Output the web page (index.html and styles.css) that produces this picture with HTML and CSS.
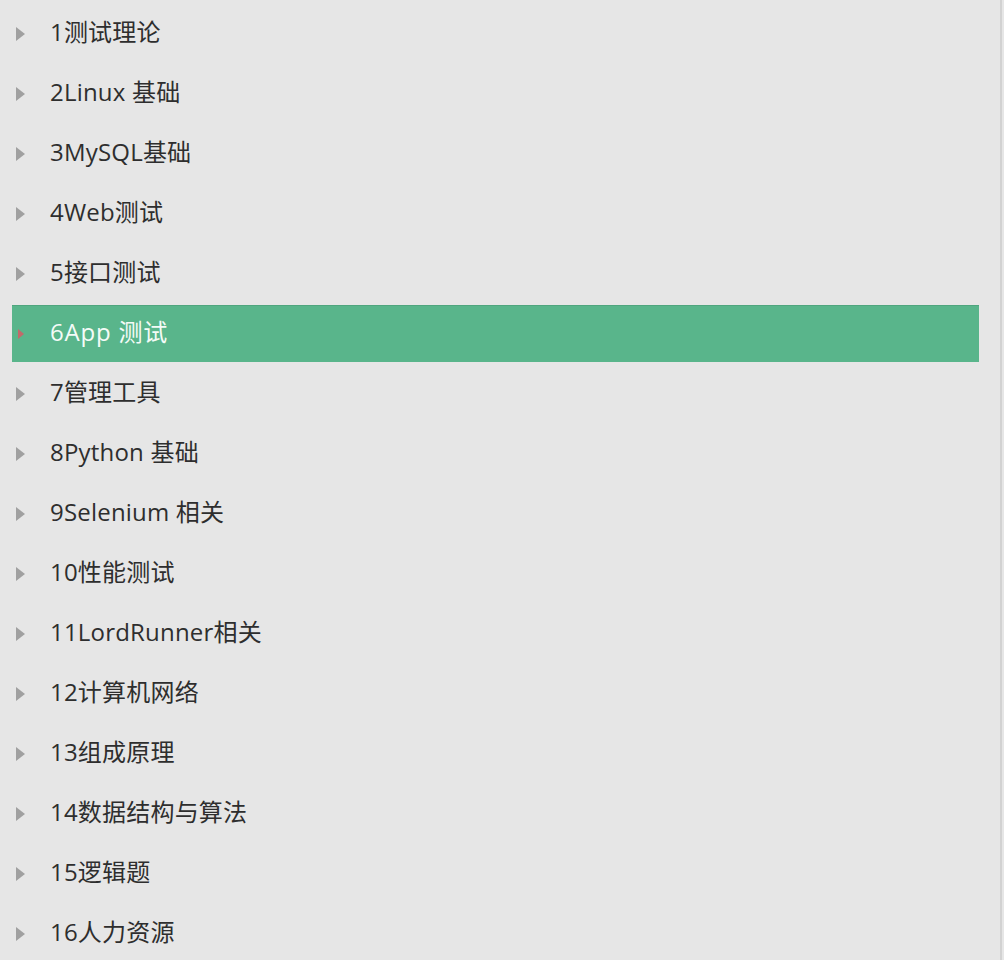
FILE: index.html
```html
<!DOCTYPE html>
<html lang="zh-CN">
<head>
<meta charset="utf-8">
<link rel="stylesheet" href="styles.css">
</head>
<body>
<div class="panel">
  <ul class="tree">
    <li class="item"><span class="arrow"></span><span class="label">1测试理论</span></li>
    <li class="item"><span class="arrow"></span><span class="label">2Linux 基础</span></li>
    <li class="item"><span class="arrow"></span><span class="label">3MySQL基础</span></li>
    <li class="item"><span class="arrow"></span><span class="label">4Web测试</span></li>
    <li class="item"><span class="arrow"></span><span class="label">5接口测试</span></li>
    <li class="item active"><span class="arrow"></span><span class="label">6App 测试</span></li>
    <li class="item"><span class="arrow"></span><span class="label">7管理工具</span></li>
    <li class="item"><span class="arrow"></span><span class="label">8Python 基础</span></li>
    <li class="item"><span class="arrow"></span><span class="label">9Selenium 相关</span></li>
    <li class="item"><span class="arrow"></span><span class="label">10性能测试</span></li>
    <li class="item"><span class="arrow"></span><span class="label">11LordRunner相关</span></li>
    <li class="item"><span class="arrow"></span><span class="label">12计算机网络</span></li>
    <li class="item"><span class="arrow"></span><span class="label">13组成原理</span></li>
    <li class="item"><span class="arrow"></span><span class="label">14数据结构与算法</span></li>
    <li class="item"><span class="arrow"></span><span class="label">15逻辑题</span></li>
    <li class="item"><span class="arrow"></span><span class="label">16人力资源</span></li>
  </ul>
</div>
</body>
</html>
```

FILE: styles.css
```css
html, body {
  margin: 0;
  padding: 0;
  background: #e6e6e6;
}
.panel {
  width: 1002px;
  height: 960px;
  border-right: 2px solid #d2d2d2;
  box-sizing: border-box;
  overflow: hidden;
  font-family: "Open Sans", "Noto Sans CJK SC", sans-serif;
}
.tree {
  list-style: none;
  margin: 0;
  padding: 5px 0 0 12px;
  display: flex;
  flex-direction: column;
  gap: 3px;
}
.item {
  width: 967px;
  height: 57px;
  display: flex;
  align-items: center;
  box-sizing: border-box;
}
.arrow {
  width: 0;
  height: 0;
  border-top: 7px solid transparent;
  border-bottom: 7px solid transparent;
  border-left: 9px solid #a0a0a0;
  margin-left: 4px;
  margin-right: 25px;
}
.label {
  font-size: 24px;
  color: #2e2e2e;
  letter-spacing: 0.2px;
  line-height: 1;
  margin-top: -4px;
}
.item.active {
  background: #59b58b;
  border-top: 1px solid #4fa57e;
}
.item.active .arrow {
  border-top-width: 5px;
  border-bottom-width: 5px;
  border-left: 6px solid #c26a6a;
  margin-left: 6px;
  margin-right: 26px;
}
.item.active .label {
  color: #f4fbf7;
  letter-spacing: 0.8px;
}
```
